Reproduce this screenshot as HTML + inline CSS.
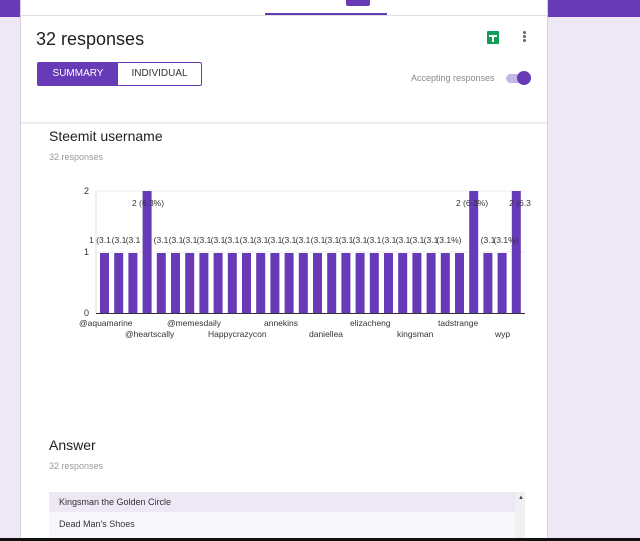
<!DOCTYPE html>
<html><head><style>
body{margin:0;width:640px;height:541px;overflow:hidden;background:#ede7f6;font-family:"Liberation Sans",sans-serif;position:relative}
.band{position:absolute;left:0;top:0;width:640px;height:17px;background:#673ab7}
.card{position:absolute;left:20px;top:0;width:526px;height:541px;background:#fff;border-left:1px solid #d6d0e0;border-right:1px solid #d6d0e0}
.abs{position:absolute}
</style></head><body>
<div class="band"></div>
<div class="card">
  <div class="abs" style="left:325px;top:0;width:24px;height:6px;background:#673ab7;border-radius:0 0 2px 2px"></div>
  <div class="abs" style="left:244px;top:13px;width:122px;height:2px;background:#673ab7"></div>
  <div class="abs" style="left:0;top:15px;width:526px;height:1px;background:#e0e0e0"></div>
  <div class="abs" style="left:15px;top:29px;font-size:18px;color:#212121">32 responses</div>
  <div class="abs" style="left:466px;top:31px;width:12px;height:13px;background:#0f9d58;border-radius:1px"><div class="abs" style="left:2px;top:4px;width:8px;height:1.5px;background:#fff"></div><div class="abs" style="left:5px;top:4px;width:1.5px;height:7px;background:#fff"></div></div>
  <div class="abs" style="left:502px;top:31px;width:3px;height:3px;border-radius:50%;background:#666;box-shadow:0 4px 0 #666,0 8px 0 #666"></div>
  <div class="abs" style="left:16px;top:62px;width:163px;height:22px;border:1px solid #673ab7;border-radius:2px;font-size:10px">
    <div class="abs" style="left:0;top:0;width:80px;height:22px;background:#673ab7;color:#fff;text-align:center;line-height:22px">SUMMARY</div>
    <div class="abs" style="left:80px;top:0;width:83px;height:22px;color:#333;text-align:center;line-height:22px">INDIVIDUAL</div>
  </div>
  <div class="abs" style="left:390px;top:73px;font-size:9px;color:#888">Accepting responses</div>
  <div class="abs" style="left:485px;top:74px;width:22px;height:9px;border-radius:5px;background:#c6b6e6"></div>
  <div class="abs" style="left:496px;top:71px;width:14px;height:14px;border-radius:50%;background:#673ab7"></div>
  <div class="abs" style="left:0;top:122px;width:526px;height:2px;background:#eee"></div>
  <div class="abs" style="left:28px;top:128px;font-size:14px;color:#212121">Steemit username</div>
  <div class="abs" style="left:28px;top:152px;font-size:9px;color:#999">32 responses</div>
  <div class="abs" style="left:28px;top:437px;font-size:14px;color:#212121">Answer</div>
  <div class="abs" style="left:28px;top:461px;font-size:9px;color:#999">32 responses</div>
  <div class="abs" style="left:28px;top:492px;width:466px;height:49px;background:#f9f7fd"></div>
  <div class="abs" style="left:28px;top:492px;width:466px;height:20px;background:#ede7f6;font-size:9px;color:#333;line-height:20px;text-indent:10px">Kingsman the Golden Circle</div>
  <div class="abs" style="left:28px;top:514px;width:466px;height:20px;font-size:9px;color:#333;line-height:20px;text-indent:10px">Dead Man's Shoes</div>
  <div class="abs" style="left:494px;top:492px;width:10px;height:49px;background:#f0f0f0"></div>
  <div class="abs" style="left:497px;top:495px;font-size:6px;color:#444">▲</div>
</div>
<svg class="abs" style="left:0;top:0" width="640" height="541" font-family="Liberation Sans,sans-serif">
<g stroke="#eee"><line x1="96" y1="191" x2="525" y2="191"/><line x1="96" y1="252" x2="525" y2="252"/></g>
<line x1="96" y1="191" x2="96" y2="313" stroke="#ddd"/>
<line x1="96" y1="313.5" x2="525" y2="313.5" stroke="#333"/>
<g font-size="9" fill="#333" text-anchor="end"><text x="89" y="194">2</text><text x="89" y="255">1</text><text x="89" y="316">0</text></g>
<g fill="#673ab7">
<rect x="100" y="253" width="9" height="60"/><rect x="114.2" y="253" width="9" height="60"/><rect x="128.4" y="253" width="9" height="60"/><rect x="142.6" y="191" width="9" height="122"/><rect x="156.8" y="253" width="9" height="60"/><rect x="171" y="253" width="9" height="60"/><rect x="185.2" y="253" width="9" height="60"/><rect x="199.4" y="253" width="9" height="60"/><rect x="213.6" y="253" width="9" height="60"/><rect x="227.8" y="253" width="9" height="60"/><rect x="242" y="253" width="9" height="60"/><rect x="256.2" y="253" width="9" height="60"/><rect x="270.4" y="253" width="9" height="60"/><rect x="284.6" y="253" width="9" height="60"/><rect x="298.8" y="253" width="9" height="60"/><rect x="313" y="253" width="9" height="60"/><rect x="327.2" y="253" width="9" height="60"/><rect x="341.4" y="253" width="9" height="60"/><rect x="355.6" y="253" width="9" height="60"/><rect x="369.8" y="253" width="9" height="60"/><rect x="384" y="253" width="9" height="60"/><rect x="398.2" y="253" width="9" height="60"/><rect x="412.4" y="253" width="9" height="60"/><rect x="426.6" y="253" width="9" height="60"/><rect x="440.8" y="253" width="9" height="60"/><rect x="455" y="253" width="9" height="60"/><rect x="469.2" y="191" width="9" height="122"/><rect x="483.4" y="253" width="9" height="60"/><rect x="497.6" y="253" width="9" height="60"/><rect x="511.8" y="191" width="9" height="122"/>
</g>
<g font-size="8.5" fill="#333" text-anchor="middle">
<text x="100" y="243">1 (3.1</text><text x="119" y="243">(3.1</text><text x="133" y="243">(3.1</text><text x="161" y="243">(3.1</text><text x="176" y="243">(3.1</text><text x="190" y="243">(3.1</text><text x="204" y="243">(3.1</text><text x="218" y="243">(3.1</text><text x="232" y="243">(3.1</text><text x="247" y="243">(3.1</text><text x="261" y="243">(3.1</text><text x="275" y="243">(3.1</text><text x="289" y="243">(3.1</text><text x="303" y="243">(3.1</text><text x="318" y="243">(3.1</text><text x="332" y="243">(3.1</text><text x="346" y="243">(3.1</text><text x="360" y="243">(3.1</text><text x="374" y="243">(3.1</text><text x="389" y="243">(3.1</text><text x="403" y="243">(3.1</text><text x="417" y="243">(3.1</text><text x="431" y="243">(3.1</text><text x="449" y="243">(3.1%)</text><text x="488" y="243">(3.1</text><text x="506" y="243">(3.1%)</text>
<text x="148" y="206">2 (6.3%)</text><text x="472" y="206">2 (6.3%)</text><text x="520" y="206">2 (6.3</text>
</g>
<g font-size="8.5" fill="#333">
<text x="79" y="326">@aquamarine</text><text x="125" y="337">@heartscally</text><text x="167" y="326">@memesdaily</text><text x="208" y="337">Happycrazycon</text><text x="264" y="326">annekins</text><text x="309" y="337">daniellea</text><text x="350" y="326">elizacheng</text><text x="397" y="337">kingsman</text><text x="438" y="326">tadstrange</text><text x="495" y="337">wyp</text>
</g>
<rect x="0" y="538" width="640" height="3" fill="#111"/>
</svg>
</body></html>
